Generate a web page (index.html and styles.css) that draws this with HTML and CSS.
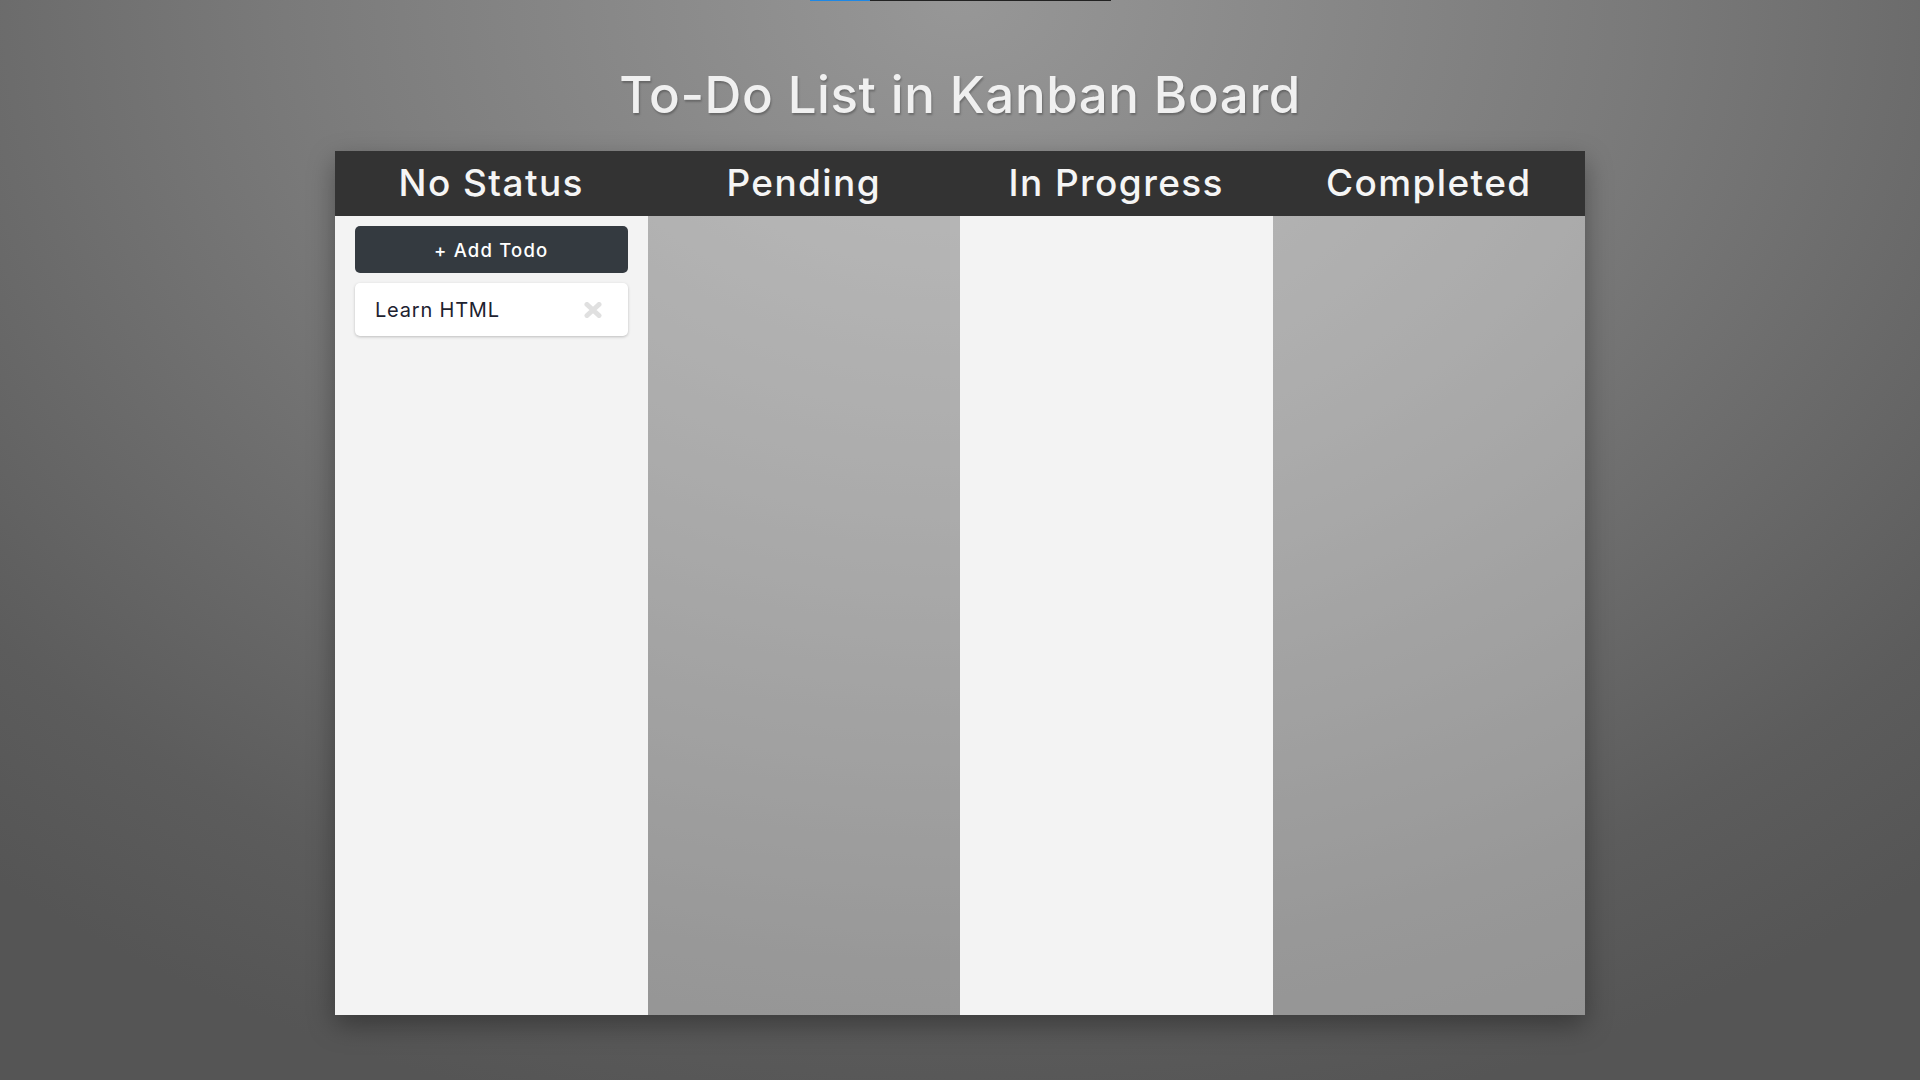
FILE: index.html
```html
<!DOCTYPE html>
<html lang="en">
<head>
<meta charset="utf-8">
<title>To-Do List in Kanban Board</title>
<link rel="stylesheet" href="styles.css">
</head>
<body>
  <div class="topbar"><div class="topbar-fill"></div></div>
  <h1 class="title">To-Do List in Kanban Board</h1>
  <main class="board">
    <section class="column col-light">
      <header class="col-head">No Status</header>
      <div class="col-body">
        <button class="add-btn">+ Add Todo</button>
        <div class="todo">
          <span class="todo-text">Learn HTML</span>
          <svg class="todo-close" viewBox="0 0 20 16" width="20" height="16" aria-hidden="true">
            <path d="M4 2.5 L16 13.5 M16 2.5 L4 13.5" stroke="#e0e0e0" stroke-width="5" stroke-linecap="round" fill="none"/>
          </svg>
        </div>
      </div>
    </section>
    <section class="column col-glass">
      <header class="col-head">Pending</header>
      <div class="col-body"></div>
    </section>
    <section class="column col-light">
      <header class="col-head">In Progress</header>
      <div class="col-body"></div>
    </section>
    <section class="column col-glass">
      <header class="col-head">Completed</header>
      <div class="col-body"></div>
    </section>
  </main>
</body>
</html>
```
FILE: styles.css
```css
html, body {
  margin: 0;
  padding: 0;
  height: 100%;
}
body {
  font-family: "Inter", "Liberation Sans", sans-serif;
  background: radial-gradient(ellipse 1500px 1150px at 50% 0%, #979797 0%, #7a7a7a 45%, #5c5c5c 85%, #555555 100%);
  overflow: hidden;
  display: flex;
  flex-direction: column;
  align-items: center;
}
.topbar {
  width: 301px;
  height: 1px;
  background: #222;
  display: flex;
}
.topbar-fill {
  width: 60px;
  background: #1e88e5;
}
.title {
  margin: 64px 0 26px;
  font-size: 51px;
  line-height: 60px;
  font-weight: 500;
  color: #f0f0f0;
  text-shadow: 1px 2px 2px rgba(0, 0, 0, 0.25);
  letter-spacing: 0.6px;
}
.board {
  width: 1250px;
  height: 864px;
  display: grid;
  grid-template-columns: repeat(4, 1fr);
  box-shadow: 0 10px 25px rgba(0, 0, 0, 0.35);
}
.column {
  display: flex;
  flex-direction: column;
}
.col-head {
  height: 65px;
  line-height: 63px;
  background: #333333;
  color: #f5f5f5;
  text-align: center;
  font-size: 37px;
  font-weight: 500;
  letter-spacing: 1.4px;
}
.col-body {
  flex: 1;
  padding: 10px 20px;
  display: flex;
  flex-direction: column;
  gap: 10px;
}
.col-light .col-body {
  background: #f3f3f3;
}
.col-glass .col-body {
  background: rgba(255, 255, 255, 0.37);
}
.add-btn {
  height: 47px;
  border: none;
  border-radius: 5px;
  background: #343a40;
  color: #ffffff;
  font-family: inherit;
  font-size: 18.5px;
  font-weight: 500;
  letter-spacing: 1.2px;
  cursor: pointer;
}
.todo {
  height: 53px;
  box-sizing: border-box;
  padding: 0 20px;
  background: #ffffff;
  border-radius: 5px;
  box-shadow: 0 1px 3px rgba(0, 0, 0, 0.22);
  display: flex;
  align-items: center;
  justify-content: space-between;
}
.todo-text {
  font-size: 20px;
  letter-spacing: 0.8px;
  color: #1d2230;
}
.todo-close {
  display: block;
  margin-right: 5px;
}
```
